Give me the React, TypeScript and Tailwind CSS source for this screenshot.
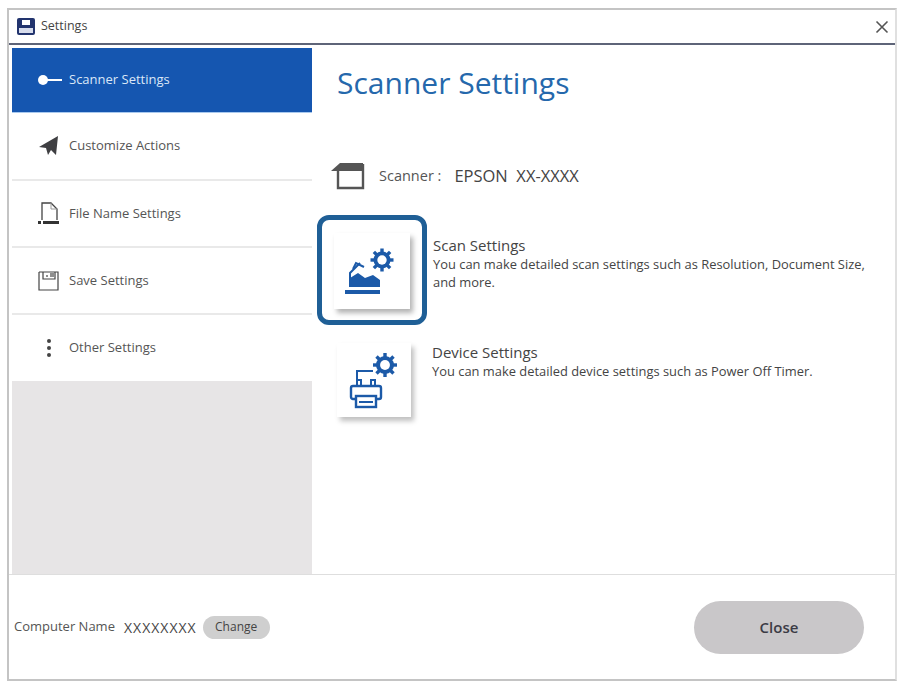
import React from 'react';

const font = { fontFamily: '"Open Sans", "Noto Sans", sans-serif' };

const GearDots = ({ cx, cy, r, color }: { cx: number; cy: number; r: number; color: string }) => (
    <g>
        {[0, 45, 90, 135].map(a => (
            <rect key={a} x={cx - 1.7} y={cy - r - 3} width={3.4} height={2 * r + 6} fill={color} transform={`rotate(${a} ${cx} ${cy})`} />
        ))}
        <circle cx={cx} cy={cy} r={r} fill={color} />
        <circle cx={cx} cy={cy} r={r * 0.55} fill="#fff" />
    </g>
);

const ScannerKeyIcon = () => (
    <svg width="26" height="16" viewBox="0 0 26 16">
        <circle cx="7" cy="8" r="5" fill="#fff" />
        <rect x="10" y="7" width="16" height="2" fill="#fff" />
    </svg>
);

const PlaneIcon = () => (
    <svg width="20" height="20" viewBox="0 0 20 20">
        <path d="M19 0 L0 11 L7 12 L9 19 L12 14 L17 19 Z" fill="#3f3f42" />
    </svg>
);

const FileIcon = () => (
    <svg width="22" height="26" viewBox="0 0 22 26" fill="none">
        <path d="M4 19 V2 H13 L19 8 V19" stroke="#444" strokeWidth="1.3" />
        <path d="M13 2 V8 H19" stroke="#999" strokeWidth="1" />
        <rect x="0" y="20" width="3" height="3" fill="#333" />
        <rect x="5" y="20" width="16" height="3" fill="#333" />
    </svg>
);

const SaveIcon = () => (
    <svg width="22" height="22" viewBox="0 0 22 22" fill="none">
        <path d="M1 2 V20 H20 V2 H1" stroke="#444" strokeWidth="1.2" />
        <path d="M5 2 V9 H17 V2" stroke="#444" strokeWidth="1.2" />
        <path d="M9 7 V5 M13 7 V3 M15 7 V3" stroke="#444" strokeWidth="1.2" />
    </svg>
);

const DotsIcon = () => (
    <svg width="6" height="20" viewBox="0 0 6 20">
        <circle cx="3" cy="3" r="2" fill="#444" />
        <circle cx="3" cy="10" r="2" fill="#444" />
        <circle cx="3" cy="17" r="2" fill="#444" />
    </svg>
);

const ScanIcon = () => (
    <svg width="56" height="56" viewBox="0 0 56 56" fill="none">
        <GearDots cx={38} cy={17} r={8.5} color="#1c5aa8" />
        <path d="M6 44 V30 L16 20" stroke="#1c5aa8" strokeWidth="2" />
        <path d="M9 26 L12 20 L20 24" stroke="#1c5aa8" strokeWidth="2" />
        <path d="M6 44 V35 L14 30 L21 35 L29 32 L36 37 V44 Z" fill="#1c5aa8" />
        <rect x="1" y="47" width="35" height="4" fill="#1c5aa8" />
    </svg>
);

const DeviceIcon = () => (
    <svg width="56" height="60" viewBox="0 0 56 60" fill="none">
        <GearDots cx={39} cy={15} r={9} color="#1c5aa8" />
        <path d="M11 34 V21 H27" stroke="#1c5aa8" strokeWidth="2" />
        <path d="M11 36 V30 H15 V36 M25 36 V30 H29 V36" stroke="#1c5aa8" strokeWidth="2" />
        <rect x="5" y="36" width="30" height="13" rx="2" stroke="#1c5aa8" strokeWidth="2.4" />
        <rect x="10" y="46" width="20" height="11" fill="#fff" stroke="#1c5aa8" strokeWidth="2.4" />
        <path d="M13 52 H27" stroke="#1c5aa8" strokeWidth="2" />
    </svg>
);

const ScannerBoxIcon = () => (
    <svg width="34" height="28" viewBox="0 0 34 28" fill="none">
        <path d="M0 9 L9 1 H32 V9 Z" fill="#555" />
        <path d="M7 9 V26 H32 V2" stroke="#555" strokeWidth="2.4" />
    </svg>
);

const navItems = [
    { label: 'Customize Actions', icon: <PlaneIcon />, h: 'h-[68px]' },
    { label: 'File Name Settings', icon: <FileIcon />, h: 'h-[67px]' },
    { label: 'Save Settings', icon: <SaveIcon />, h: 'h-[67px]' },
    { label: 'Other Settings', icon: <DotsIcon />, h: 'h-[66px]' },
];

export default function App() {
    return (
        <div className="w-[899px] h-[682px] bg-white pt-[8px] pl-[7px] pr-[2px] pb-[1px] overflow-hidden" style={font}>
            <div className="w-full h-full flex flex-col border-2 border-[#c4c4c4] border-r-[#e0e0e0] bg-white">
                <div className="h-[35px] shrink-0 flex items-center justify-between pl-[8px] pr-[6px] border-b-2 border-[#5e6478]">
                    <div className="flex items-center gap-[6px]">
                        <svg width="18" height="18" viewBox="0 0 18 18" fill="none">
                            <rect x="0" y="0" width="18" height="17" rx="2" fill="#22346e" />
                            <rect x="5" y="2" width="8" height="5" fill="#fff" />
                            <rect x="2" y="10" width="14" height="5" fill="#d7dcec" />
                        </svg>
                        <span className="text-[12.5px] text-[#444]">Settings</span>
                    </div>
                    <svg width="14" height="14" viewBox="0 0 14 14">
                        <path d="M1.5 1.5 L12.5 12.5 M12.5 1.5 L1.5 12.5" stroke="#555" strokeWidth="1.6" />
                    </svg>
                </div>

                <div className="flex-1 flex pt-[3px] pl-[3px] min-h-0">
                    <div className="w-[300px] shrink-0 bg-[#e7e5e6] flex flex-col">
                        <div className="h-[65px] bg-[#1556b0] border-b border-[#a9c9ee] flex items-center pl-[24px] gap-[7px]">
                            <ScannerKeyIcon />
                            <span className="text-[13px] text-[#dbe7f7]">Scanner Settings</span>
                        </div>
                        {navItems.map(item => (
                            <div key={item.label} className={`${item.h} bg-white border-b-2 border-[#e9e9e9] last:border-b-0 flex items-center`}>
                                <div className="w-[57px] flex justify-center pl-[16px] shrink-0">{item.icon}</div>
                                <span className="text-[13px] text-[#555]">{item.label}</span>
                            </div>
                        ))}
                    </div>

                    <div className="flex-1 flex flex-col pl-[5px]">
                        <h1 className="text-[30px] leading-[40px] text-[#2568ac] pl-[20px] pt-[15px]">Scanner Settings</h1>
                        <div className="flex items-center pl-[14px] mt-[59px] gap-[14px]">
                            <ScannerBoxIcon />
                            <span className="text-[14.5px] text-[#555]">Scanner :</span>
                            <span className="text-[16.5px] text-[#444] -ml-[1px]">EPSON&nbsp; XX-XXXX</span>
                        </div>
                        <div className="flex mt-[25px]">
                            <div className="w-[110px] h-[110px] shrink-0 border-[5px] border-[#1f5f96] rounded-[12px] flex items-center justify-center">
                                <div className="w-[76px] h-[76px] mt-[2px] bg-white shadow-[3px_4px_5px_rgba(0,0,0,0.3)] flex items-center justify-center">
                                    <ScanIcon />
                                </div>
                            </div>
                            <div className="ml-[6px] pt-[21px] w-[445px]">
                                <div className="text-[15px] leading-[19px] text-[#444]">Scan Settings</div>
                                <p className="text-[12.9px] leading-[18px] text-[#444]">You can make detailed scan settings such as Resolution, Document Size, and more.</p>
                            </div>
                        </div>
                        <div className="flex mt-[18px] pl-[20px]">
                            <div className="w-[74px] h-[74px] shrink-0 bg-white shadow-[3px_4px_5px_rgba(0,0,0,0.25)] flex items-center justify-center">
                                <DeviceIcon />
                            </div>
                            <div className="ml-[21px]">
                                <div className="text-[15px] leading-[19px] text-[#444]">Device Settings</div>
                                <p className="text-[12.9px] leading-[18px] text-[#444]">You can make detailed device settings such as Power Off Timer.</p>
                            </div>
                        </div>
                    </div>
                </div>

                <div className="h-[105px] shrink-0 border-t border-[#dedede] flex items-center justify-between pl-[5px] pr-[31px]">
                    <div className="flex items-center text-[13px] text-[#555]">
                        <span>Computer Name</span>
                        <span className="ml-[9px] text-[14px] tracking-[1px] text-[#444]">XXXXXXXX</span>
                        <button className="ml-[6px] w-[67px] h-[23px] rounded-full bg-[#cfcfcf] text-[12px] text-[#444]">Change</button>
                    </div>
                    <button className="w-[170px] h-[53px] rounded-full bg-[#c9c7c9] text-[15px] font-semibold text-[#3b3b45]">Close</button>
                </div>
            </div>
        </div>
    );
}
